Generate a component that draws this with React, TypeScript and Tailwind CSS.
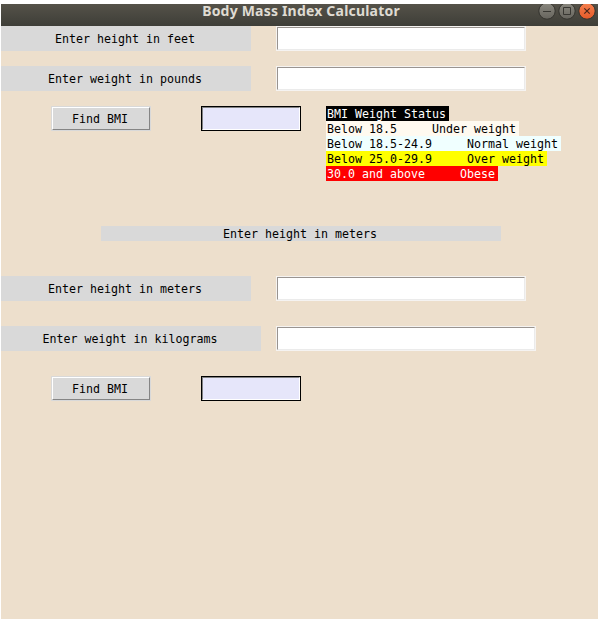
import type { ReactNode } from "react";

function Label({ children, className = "w-[250px]" }: { children: ReactNode; className?: string }) {
  return (
    <div className={`flex h-[25px] shrink-0 items-center justify-center whitespace-pre bg-[#d9d9d9] pr-0.5 pt-0.5 ${className}`}>
      {children}
    </div>
  );
}

function Entry({ className = "w-[250px]" }: { className?: string }) {
  return (
    <div className={`h-[25px] shrink-0 border border-[#f5f3f1] bg-white ${className}`}>
      <div className="h-full w-full border border-b-[#ebebeb] border-l-[#999490] border-r-[#ebebeb] border-t-[#999490]" />
    </div>
  );
}

function FindButton() {
  return (
    <button className="ml-[50px] h-[25px] w-[100px] shrink-0 border border-[#d9d9d9]">
      <span className="flex h-full w-full items-center justify-center border border-b-[#858585] border-l-white border-r-[#858585] border-t-white bg-[#d9d9d9] pr-0.5 pt-0.5">
        Find BMI
      </span>
    </button>
  );
}

function Result() {
  return (
    <div className="ml-[50px] h-[25px] w-[100px] shrink-0 border border-black">
      <div className="h-full w-full border border-b-white border-l-[#828282] border-r-white border-t-[#828282] bg-[#e6e6fa]" />
    </div>
  );
}

const statuses = [
  { text: "BMI Weight Status", style: "bg-black text-white" },
  { text: "Below 18.5     Under weight", style: "bg-[#fffaf0]" },
  { text: "Below 18.5-24.9     Normal weight", style: "bg-[#f0ffff]" },
  { text: "Below 25.0-29.9     Over weight", style: "bg-[#ffff00]" },
  { text: "30.0 and above     Obese", style: "bg-[#ff0000] text-white" },
];

function WindowControls() {
  return (
    <svg className="absolute right-0 top-0" width="62" height="22" viewBox="536 4 62 22" fill="none">
      <defs>
        <linearGradient id="gray" x1="0" y1="0" x2="0" y2="1">
          <stop stopColor="#8a887f" />
          <stop offset="1" stopColor="#66645d" />
        </linearGradient>
        <linearGradient id="orange" x1="0" y1="0" x2="0" y2="1">
          <stop stopColor="#f4804f" />
          <stop offset="1" stopColor="#e65a28" />
        </linearGradient>
      </defs>
      <circle cx="547" cy="11" r="8.2" fill="url(#gray)" stroke="#34332e" />
      <circle cx="567" cy="11" r="8.2" fill="url(#gray)" stroke="#34332e" />
      <circle cx="587" cy="11" r="8.2" fill="url(#orange)" stroke="#34332e" />
      <path d="M543 11.5H551" stroke="#383732" />
      <path d="M563.5 7.5H570.5V14.5H563.5Z" stroke="#383732" />
      <path d="M584.3 8.3L589.7 13.7M589.7 8.3L584.3 13.7" stroke="#4b271b" strokeWidth="1.2" />
    </svg>
  );
}

export default function App() {
  return (
    <div className="h-[623px] w-[601px] overflow-hidden bg-white pl-px pt-1">
      <div className="h-[615px] w-[597px] bg-[#eddfcc] font-['DejaVu_Sans_Mono',monospace] text-[11.63px] leading-[15px] text-black">
        <header className="relative flex h-[22px] items-start justify-center bg-gradient-to-b from-[#555249] to-[#3e3e38] pl-[3px]">
          <h1 className="whitespace-nowrap font-['Noto_Sans',sans-serif] text-[14px] font-bold leading-[14px] tracking-[0.2px] text-[#dfdbd2]">
            Body Mass Index Calculator
          </h1>
          <WindowControls />
        </header>

        <main>
          <div className="flex gap-[25px]">
            <Label>Enter height in feet</Label>
            <Entry />
          </div>
          <div className="mt-[15px] flex gap-[25px]">
            <Label>Enter weight in pounds</Label>
            <Entry />
          </div>
          <div className="mt-[15px] flex h-[75px] items-start">
            <FindButton />
            <Result />
            <div className="ml-[25px] flex flex-col items-start">
              {statuses.map((s) => (
                <div key={s.text} className={`h-[15px] whitespace-pre pl-px pr-[3px] leading-[17px] ${s.style}`}>
                  {s.text}
                </div>
              ))}
            </div>
          </div>
          <div className="ml-[100px] mt-[45px] h-[15px] w-[400px] bg-[#d9d9d9] pr-0.5 text-center leading-[17px]">
            Enter height in meters
          </div>
          <div className="mt-[35px] flex gap-[25px]">
            <Label>Enter height in meters</Label>
            <Entry />
          </div>
          <div className="mt-[25px] flex gap-[15px]">
            <Label className="w-[260px]">Enter weight in kilograms</Label>
            <Entry className="w-[260px]" />
          </div>
          <div className="mt-[25px] flex">
            <FindButton />
            <Result />
          </div>
        </main>
      </div>
    </div>
  );
}
